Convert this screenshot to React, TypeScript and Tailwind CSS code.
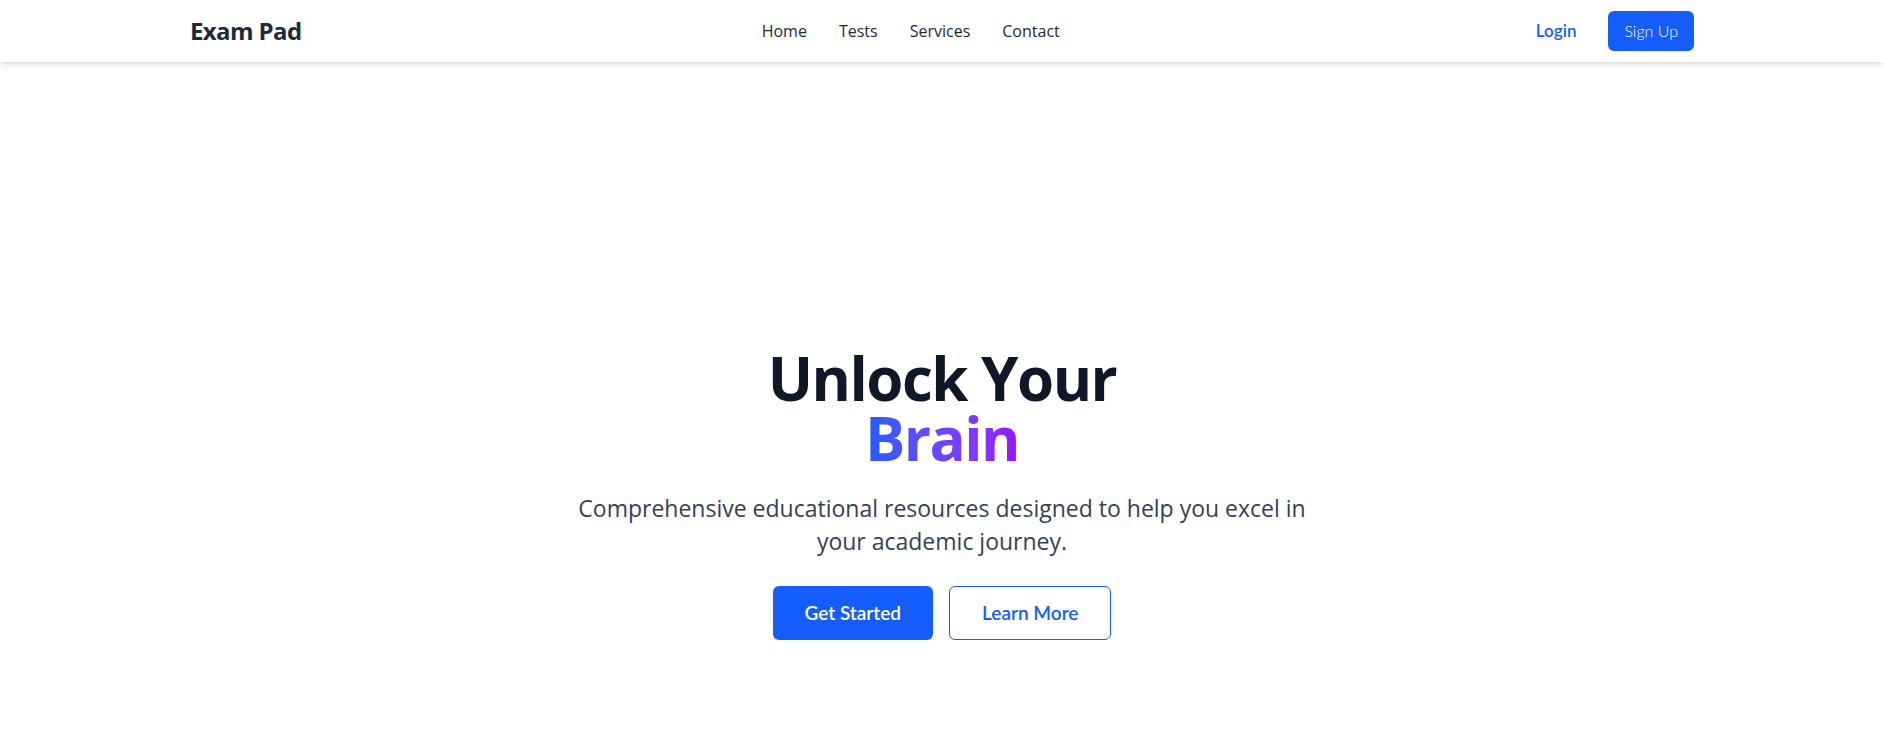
export default function App() {
  return (
    <div className="min-h-screen bg-white font-['Open_Sans',sans-serif]">
      {/* navbar */}
      <nav className="relative z-10 bg-white shadow-md">
        <div className="mx-auto flex h-[62px] max-w-screen-2xl items-center justify-between px-4">
          <span className="text-2xl font-bold tracking-tight text-gray-800">Exam Pad</span>

          <div className="flex items-center gap-8 text-base text-gray-800">
            {["Home", "Tests", "Services", "Contact"].map((link) => (
              <a key={link} className="cursor-pointer">
                {link}
              </a>
            ))}
          </div>

          <div className="flex items-center gap-4 font-['Lato',sans-serif]">
            <button className="px-4 py-2 text-[17px] font-semibold text-blue-600">Login</button>
            <button className="rounded-md bg-blue-600 px-4 py-2 text-base font-light text-white">Sign Up</button>
          </div>
        </div>
      </nav>

      {/* hero */}
      <main className="flex flex-col items-center px-4 pt-[286px] text-center">
        <h1 className="text-6xl font-bold tracking-tight text-gray-900">
          Unlock Your
          <br />
          <span className="inline-block bg-gradient-to-r from-blue-600 to-purple-600 bg-clip-text text-transparent">
            Brain
          </span>
        </h1>

        <p className="mt-6 max-w-3xl text-[23px] leading-[33px] text-gray-700">
          Comprehensive educational resources designed to help you excel in your academic journey.
        </p>

        <div className="mt-7 flex gap-4 font-['Lato',sans-serif]">
          <button className="h-[54px] rounded-md bg-blue-600 px-8 text-[19px] font-semibold text-white">Get Started</button>
          <button className="h-[54px] rounded-md border border-blue-600 bg-white px-8 text-[19px] font-semibold text-blue-600">
            Learn More
          </button>
        </div>
      </main>
    </div>
  );
}
